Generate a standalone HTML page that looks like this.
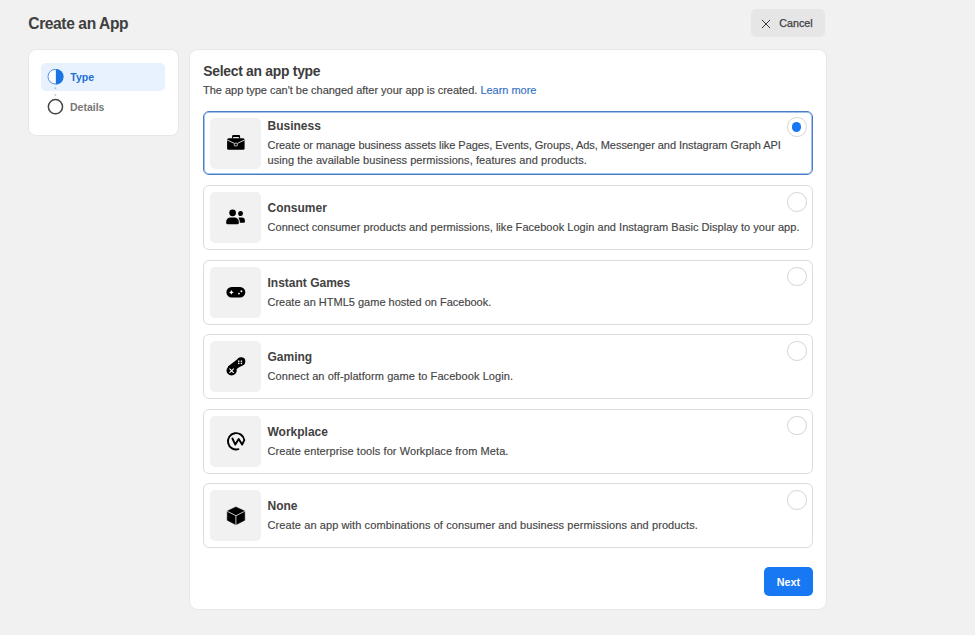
<!DOCTYPE html>
<html><head><meta charset="utf-8">
<style>
*{box-sizing:border-box;margin:0;padding:0}
html,body{width:975px;height:635px;overflow:hidden;background:#f1f1f1;font-family:"Liberation Sans",sans-serif;color:#333}
.abs{position:absolute}
.t{position:absolute;white-space:nowrap;line-height:1}
#title{left:28.3px;top:15.9px;font-size:15.6px;letter-spacing:-0.4px;font-weight:bold;color:#404040}
#cancel{left:751px;top:9px;width:74px;height:28px;border-radius:5px;background:#e6e6e6}
#cancel .t{left:28.3px;top:9.2px;font-size:10.7px;color:#3d3d3d;-webkit-text-stroke:0.25px #3d3d3d}
#side{left:28.5px;top:49.5px;width:149.5px;height:85px;border-radius:7px;background:#fff;box-shadow:0 0 0 1px rgba(0,0,0,0.04)}
#pill{left:41px;top:62.6px;width:124px;height:28px;border-radius:5px;background:#e7f2fe}
#main{left:190px;top:49.5px;width:635.5px;height:559px;border-radius:8px;background:#fff;box-shadow:0 0 0 1px rgba(0,0,0,0.04)}
.card{position:absolute;left:203px;width:610px;height:65px;border:1px solid #dcdcdc;border-radius:6px;background:#fff}
.card.sel{border-color:#4a7cc6;box-shadow:inset 0 0 0 1px #9fc2ee}
.ib{position:absolute;left:6px;top:6px;width:51px;height:51px;border-radius:5px;background:#f1f1f1}
.ib svg{position:absolute;left:13px;top:13px}
.ct{position:absolute;left:63.5px;font-size:12px;font-weight:bold;color:#424242;white-space:nowrap;line-height:1}
.cd{position:absolute;left:63.5px;font-size:11px;color:#444;-webkit-text-stroke:0.15px #444;white-space:nowrap;line-height:15.4px}
.radio{position:absolute;left:583px;width:19.5px;height:19.5px;border-radius:50%;border:1.2px solid #d4d4d4;background:#fff}
.radio.on::after{content:"";position:absolute;left:3.9px;top:3.9px;width:9.3px;height:9.3px;border-radius:50%;background:#1877f2}
#next{left:764px;top:567px;width:49px;height:29px;border-radius:5px;background:#1877f2}
#next .t{left:12.8px;top:9.8px;font-size:10.8px;font-weight:bold;color:#fff}
</style></head>
<body>
<div class="t" id="title">Create an App</div>

<div class="abs" id="cancel">
  <svg class="abs" style="left:10px;top:9.5px" width="10" height="10" viewBox="0 0 10 10"><path d="M0.9 0.9L9.1 9.1M9.1 0.9L0.9 9.1" stroke="#3a3a3a" stroke-width="1" fill="none"/></svg>
  <div class="t">Cancel</div>
</div>

<div class="abs" id="side"></div>
<div class="abs" id="pill"></div>
<svg class="abs" style="left:0;top:0" width="180" height="140" viewBox="0 0 180 140">
  <circle cx="55.3" cy="76.7" r="7.3" fill="#fbfdff" stroke="#3f82dc" stroke-width="0.9"/>
  <path d="M55.9 68.95 A7.75 7.75 0 0 1 55.9 84.45 Z" fill="#1b74e4"/>
  <circle cx="55.4" cy="88.2" r="0.9" fill="#a9bcd6"/>
  <circle cx="55.4" cy="94.9" r="1" fill="#cfcfcf"/>
  <circle cx="55.45" cy="106.7" r="7.1" fill="none" stroke="#454545" stroke-width="1.5"/>
</svg>
<div class="t" style="left:70.3px;top:72px;font-size:10.5px;font-weight:bold;color:#1b6fd9">Type</div>
<div class="t" style="left:70px;top:101.7px;font-size:10.5px;font-weight:bold;color:#777">Details</div>

<div class="abs" id="main"></div>
<div class="t" style="left:203.3px;top:64.9px;font-size:13.9px;letter-spacing:-0.28px;font-weight:bold;color:#3c3c3c">Select an app type</div>
<div class="t" style="left:203px;top:84.6px;font-size:11px;letter-spacing:-0.02px;color:#444;-webkit-text-stroke:0.15px #444">The app type can't be changed after your app is created. <span style="color:#3572c4;-webkit-text-stroke:0.15px #3572c4">Learn more</span></div>

<!-- cards -->
<div class="card sel" style="top:111px;height:64px">
  <div class="ib"></div>
  <div class="ct" style="top:8px">Business</div>
  <div class="cd" style="top:26px;letter-spacing:-0.046px">Create or manage business assets like Pages, Events, Groups, Ads, Messenger and Instagram Graph API</div><div class="cd" style="top:41.4px;letter-spacing:0.07px">using the available business permissions, features and products.</div>
  <div class="radio on" style="top:5.4px"></div>
</div>
<div class="card" style="top:185px">
  <div class="ib"></div>
  <div class="ct" style="top:16px">Consumer</div>
  <div class="cd" style="top:34px;letter-spacing:0.036px">Connect consumer products and permissions, like Facebook Login and Instagram Basic Display to your app.</div>
  <div class="radio" style="top:6px"></div>
</div>
<div class="card" style="top:259.6px">
  <div class="ib"></div>
  <div class="ct" style="top:16px">Instant Games</div>
  <div class="cd" style="top:34px">Create an HTML5 game hosted on Facebook.</div>
  <div class="radio" style="top:6px"></div>
</div>
<div class="card" style="top:334px">
  <div class="ib"></div>
  <div class="ct" style="top:16px">Gaming</div>
  <div class="cd" style="top:34px;letter-spacing:0.078px">Connect an off-platform game to Facebook Login.</div>
  <div class="radio" style="top:6px"></div>
</div>
<div class="card" style="top:408.6px">
  <div class="ib"></div>
  <div class="ct" style="top:16px">Workplace</div>
  <div class="cd" style="top:34px;letter-spacing:0.07px">Create enterprise tools for Workplace from Meta.</div>
  <div class="radio" style="top:6px"></div>
</div>
<div class="card" style="top:483px">
  <div class="ib"></div>
  <div class="ct" style="top:16px">None</div>
  <div class="cd" style="top:34px;letter-spacing:0.09px">Create an app with combinations of consumer and business permissions and products.</div>
  <div class="radio" style="top:6px"></div>
</div>

<svg class="abs" style="left:0;top:0;pointer-events:none" width="975" height="635" viewBox="0 0 975 635">
<!-- briefcase -->
<path fill-rule="evenodd" d="M233.2 135.1H239A1.1 1.1 0 0 1 240.1 136.2V138.6H232.1V136.2A1.1 1.1 0 0 1 233.2 135.1ZM233.2 136.9V138.4H238.9V136.9Z"/>
<rect x="227.1" y="138.2" width="17.5" height="11.6" rx="1.5"/>
<path d="M227.1 140L234.2 143.3M237.5 143.3L244.6 140" stroke="#fff" stroke-width="0.8" fill="none"/>
<rect x="234.3" y="143.2" width="3" height="2.7" rx="0.7" fill="#000" stroke="#fff" stroke-width="0.75"/>
<!-- consumer -->
<ellipse cx="240.55" cy="213.5" rx="2.4" ry="2.55"/>
<path d="M238.6 222.7V217.4H241.9A3 3 0 0 1 244.9 220.4V221.7A1 1 0 0 1 243.9 222.7Z"/>
<path d="M225.2 225.4V221.6A5.2 5.2 0 0 1 230.4 216.4H234.6A5.2 5.2 0 0 1 239.8 221.6V225.4Z" fill="#f1f1f1"/>
<circle cx="232.6" cy="212.8" r="3.35"/>
<path d="M226.2 222.9V221.6A4.2 4.2 0 0 1 230.4 217.4H234.6A4.2 4.2 0 0 1 238.8 221.6V222.9A1.4 1.4 0 0 1 237.4 224.3H227.6A1.4 1.4 0 0 1 226.2 222.9Z"/>
<!-- instant games -->
<rect x="226.4" y="287.1" width="18.9" height="10.4" rx="5.2"/>
<path d="M231.4 290.1Q231.7 292.1 233.7 292.4Q231.7 292.7 231.4 294.7Q231.1 292.7 229.1 292.4Q231.1 292.1 231.4 290.1Z" fill="#fff"/>
<circle cx="241.4" cy="291.3" r="0.95" fill="#fff"/>
<circle cx="239" cy="293.6" r="0.95" fill="#fff"/>
<!-- gaming -->
<path d="M238.3 358.6A4.1 4.1 0 0 1 243.8 364.6Q241.6 366.3 239.6 367Q237.8 367.8 236.5 369.6A5.1 5.1 0 0 1 227.9 366.5Z"/>
<circle cx="231.6" cy="370.5" r="5.1"/>
<circle cx="241.2" cy="361.4" r="4.1"/>
<path d="M229.5 368.6L233.7 372.8M233.7 368.6L229.5 372.8" stroke="#fff" stroke-width="1.1"/>
<rect x="238" y="360.5" width="1.4" height="1.4" fill="#fff"/><rect x="240.7" y="360.5" width="1.4" height="1.4" fill="#fff"/>
<rect x="238" y="362.7" width="1.4" height="1.4" fill="#fff"/><rect x="240.7" y="362.7" width="1.4" height="1.4" fill="#fff"/>
<!-- workplace -->
<path d="M238.4 449.2A8.2 8.2 0 1 1 244.3 440.1L242.1 444.6L238.7 439.1L235.3 444.6L232.4 438.5" stroke="#000" stroke-width="1.9" fill="none" stroke-linejoin="round" stroke-linecap="round"/>
<!-- cube -->
<path d="M235.9 506.9L244.7 511.1L244.8 520.2L235.9 524.8L227.2 520.2L227.3 511.1Z" stroke="#000" stroke-width="0.5" stroke-linejoin="round"/>
<path d="M227.3 511.3L235.9 515.7L244.7 511.3M235.9 515.7V525" stroke="#fff" stroke-width="0.9" fill="none" opacity="0.85"/>
</svg>
<div class="abs" id="next"><div class="t">Next</div></div>
</body></html>
